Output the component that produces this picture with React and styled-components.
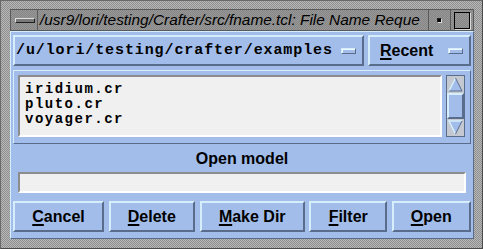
import React from "react"
import styled, { createGlobalStyle, css } from "styled-components"

const GlobalStyle = createGlobalStyle`
  html, body {
    margin: 0;
    padding: 0;
    background: #a8a8a8;
  }
  * { box-sizing: border-box; }
`

const c = {
  blue: "#a2bdea",
  light: "#d6eefc",
  dark: "#5a6c8c",
  well: "#f0f0f0",
  sunk: "#8c8c8c",
}

const raised = css`
  border-style: solid;
  border-color: ${c.light} ${c.dark} ${c.dark} ${c.light};
`
const sunken = css`
  border-style: solid;
  border-color: ${c.sunk} #ffffff #ffffff ${c.sunk};
`

const stipple = css`
  background-color: #a4a4a4;
  background-image: repeating-conic-gradient(#b8b8b8 0 25%, #8e8e8e 0 50%);
  background-size: 2px 2px;
`

const Frame = styled.div`
  ${stipple}
  width: 483px;
  height: 249px;
  padding: 8px 8px 9px 9px;
  display: flex;
  flex-direction: column;
  border-top: 1px solid #6a6a6a;
  border-left: 1px solid #6a6a6a;
  border-right: 1px solid #4a4a4a;
  border-bottom: 1px solid #4a4a4a;
`

const TitleBar = styled.div`
  height: 22px;
  display: flex;
  background: #8c8c8c;
  border: 1px solid #5a5a5a;
`

const TitleCell = styled.div`
  background-color: #909090;
  background-image: repeating-conic-gradient(#989898 0 25%, #868686 0 50%);
  background-size: 2px 2px;
  display: flex;
  align-items: center;
  justify-content: center;
  border-left: 1px solid ${({ $first }) => ($first ? "transparent" : "#5a5a5a")};
  width: ${({ $w }) => $w}px;
  flex: ${({ $grow }) => ($grow ? 1 : "none")};
  min-width: 0;
  overflow: hidden;
`

const MenuBar = styled.div`
  width: 20px;
  height: 5px;
  background: #7a7a7a;
  border-style: solid;
  border-width: 1px;
  border-color: #e0e0e0 #202020 #202020 #e0e0e0;
`

const TitleText = styled.div`
  flex: 1;
  padding-left: 2px;
  font-family: "Liberation Sans", Arial, sans-serif;
  font-style: italic;
  font-size: 15.4px;
  color: #000;
  white-space: nowrap;
  overflow: hidden;
`

const Dot = styled.div`
  width: 5px;
  height: 5px;
  background: #000;
  border: 1px solid;
  border-color: #202020 #e0e0e0 #e0e0e0 #202020;
`

const Square = styled.div`
  width: 16px;
  height: 17px;
  border: 1px solid #000;
  box-shadow: 1px 1px 0 #d8d8d8;
`

const Body = styled.div`
  flex: 1;
  background: ${c.blue};
  ${raised}
  border-width: 1px;
  padding: 3px 2px 2px 2px;
  display: flex;
  flex-direction: column;
`

const TopRow = styled.div`
  display: flex;
  gap: 4px;
  height: 31px;
`

const MenuButton = styled.div`
  ${raised}
  border-width: 2px;
  display: flex;
  align-items: center;
  flex: ${({ $grow }) => ($grow ? 1 : "none")};
  width: ${({ $w }) => ($w ? `${$w}px` : "auto")};
  padding: 0 6px 0 ${({ $pl }) => $pl}px;
  justify-content: space-between;
`

const MonoText = styled.span`
  font-family: "Liberation Mono", "Courier New", monospace;
  font-weight: bold;
  font-size: 15px;
  letter-spacing: 0.9px;
  color: #000;
`

const SansText = styled.span`
  font-family: "Liberation Sans", Arial, sans-serif;
  font-weight: bold;
  font-size: 16px;
  color: #000;
`

const Mn = styled.span`
  text-decoration: underline;
  text-decoration-thickness: 2px;
  text-underline-offset: 2px;
`

const Indicator = styled.div`
  width: 15px;
  height: 6px;
  background: ${c.blue};
  border-style: solid;
  border-width: 1px;
  border-color: ${c.light} ${c.dark} ${c.dark} ${c.light};
  box-shadow: inset 1px 1px 0 #eef8ff;
`

const ListFrame = styled.div`
  ${raised}
  border-width: 1px;
  margin-top: 4px;
  height: 74px;
  padding: 4px 5px 6px 4px;
  display: flex;
  gap: 4px;
`

const ListBox = styled.div`
  flex: 1;
  background: ${c.well};
  ${sunken}
  border-width: 2px;
  padding: 5px 5px 3px;
  display: flex;
  flex-direction: column;
`

const ListItem = styled(MonoText)`
  font-size: 14px;
  letter-spacing: 1.5px;
  line-height: 15px;
  height: 15px;
`

const Scroll = styled.div`
  width: 19px;
  border: 1px solid ${c.dark};
  background: ${c.blue};
  display: flex;
  flex-direction: column;
`

const Arrow = styled.div`
  height: 17px;
  background: #c4c8d0;
  display: flex;
`

const Thumb = styled.div`
  flex: 1;
  ${raised}
  border-width: 2px;
  background: ${c.blue};
`

const Label = styled(SansText)`
  text-align: center;
  margin-top: 6px;
  height: 22px;
  line-height: 18px;
`

const Entry = styled.div`
  height: 21px;
  margin: 0 5px;
  background: ${c.well};
  ${sunken}
  border-width: 2px;
`

const ButtonRow = styled.div`
  display: flex;
  gap: 4.5px;
  margin-top: 8px;
  height: 31px;
`

const Button = styled.div`
  flex: 1 1 auto;
  ${raised}
  border-width: 2px;
  display: flex;
  align-items: center;
  justify-content: center;
`

const UpArrow = () => (
  <svg width="17" height="17" viewBox="0 0 17 17">
    <polygon points="8.5,2 15,15 2,15" fill="#a2bdea" />
    <polyline points="2,15 8.5,2" stroke="#d6eefc" strokeWidth="1.5" fill="none" />
    <polyline points="8.5,2 15,15 2,15" stroke="#5a6c8c" strokeWidth="1" fill="none" />
  </svg>
)

const DownArrow = () => (
  <svg width="17" height="17" viewBox="0 0 17 17">
    <polygon points="2,2 15,2 8.5,15" fill="#a2bdea" />
    <polyline points="8.5,15 2,2 15,2" stroke="#d6eefc" strokeWidth="1.5" fill="none" />
    <polyline points="15,2 8.5,15" stroke="#5a6c8c" strokeWidth="1" fill="none" />
  </svg>
)

const files = ["iridium.cr", "pluto.cr", "voyager.cr"]

const buttons = [
  ["C", "ancel"],
  ["D", "elete"],
  ["M", "ake Dir"],
  ["F", "ilter"],
  ["O", "pen"],
]

const App = () => {
  return (
    <>
      <GlobalStyle />
      <Frame>
        <TitleBar>
          <TitleCell $w={26} $first>
            <MenuBar />
          </TitleCell>
          <TitleCell $grow>
            <TitleText>/usr9/lori/testing/Crafter/src/fname.tcl: File Name Reque</TitleText>
          </TitleCell>
          <TitleCell $w={22}>
            <Dot />
          </TitleCell>
          <TitleCell $w={23}>
            <Square />
          </TitleCell>
        </TitleBar>
        <Body>
          <TopRow>
            <MenuButton $grow $pl={1}>
              <MonoText>/u/lori/testing/crafter/examples</MonoText>
              <Indicator />
            </MenuButton>
            <MenuButton $w={103} $pl={10}>
              <SansText>
                <Mn>R</Mn>ecent
              </SansText>
              <Indicator />
            </MenuButton>
          </TopRow>
          <ListFrame>
            <ListBox>
              {files.map((f) => (
                <ListItem key={f}>{f}</ListItem>
              ))}
            </ListBox>
            <Scroll>
              <Arrow>
                <UpArrow />
              </Arrow>
              <Thumb />
              <Arrow>
                <DownArrow />
              </Arrow>
            </Scroll>
          </ListFrame>
          <Label>Open model</Label>
          <Entry />
          <ButtonRow>
            {buttons.map(([m, rest]) => (
              <Button key={m}>
                <SansText>
                  <Mn>{m}</Mn>
                  {rest}
                </SansText>
              </Button>
            ))}
          </ButtonRow>
        </Body>
      </Frame>
    </>
  )
}

export default App
